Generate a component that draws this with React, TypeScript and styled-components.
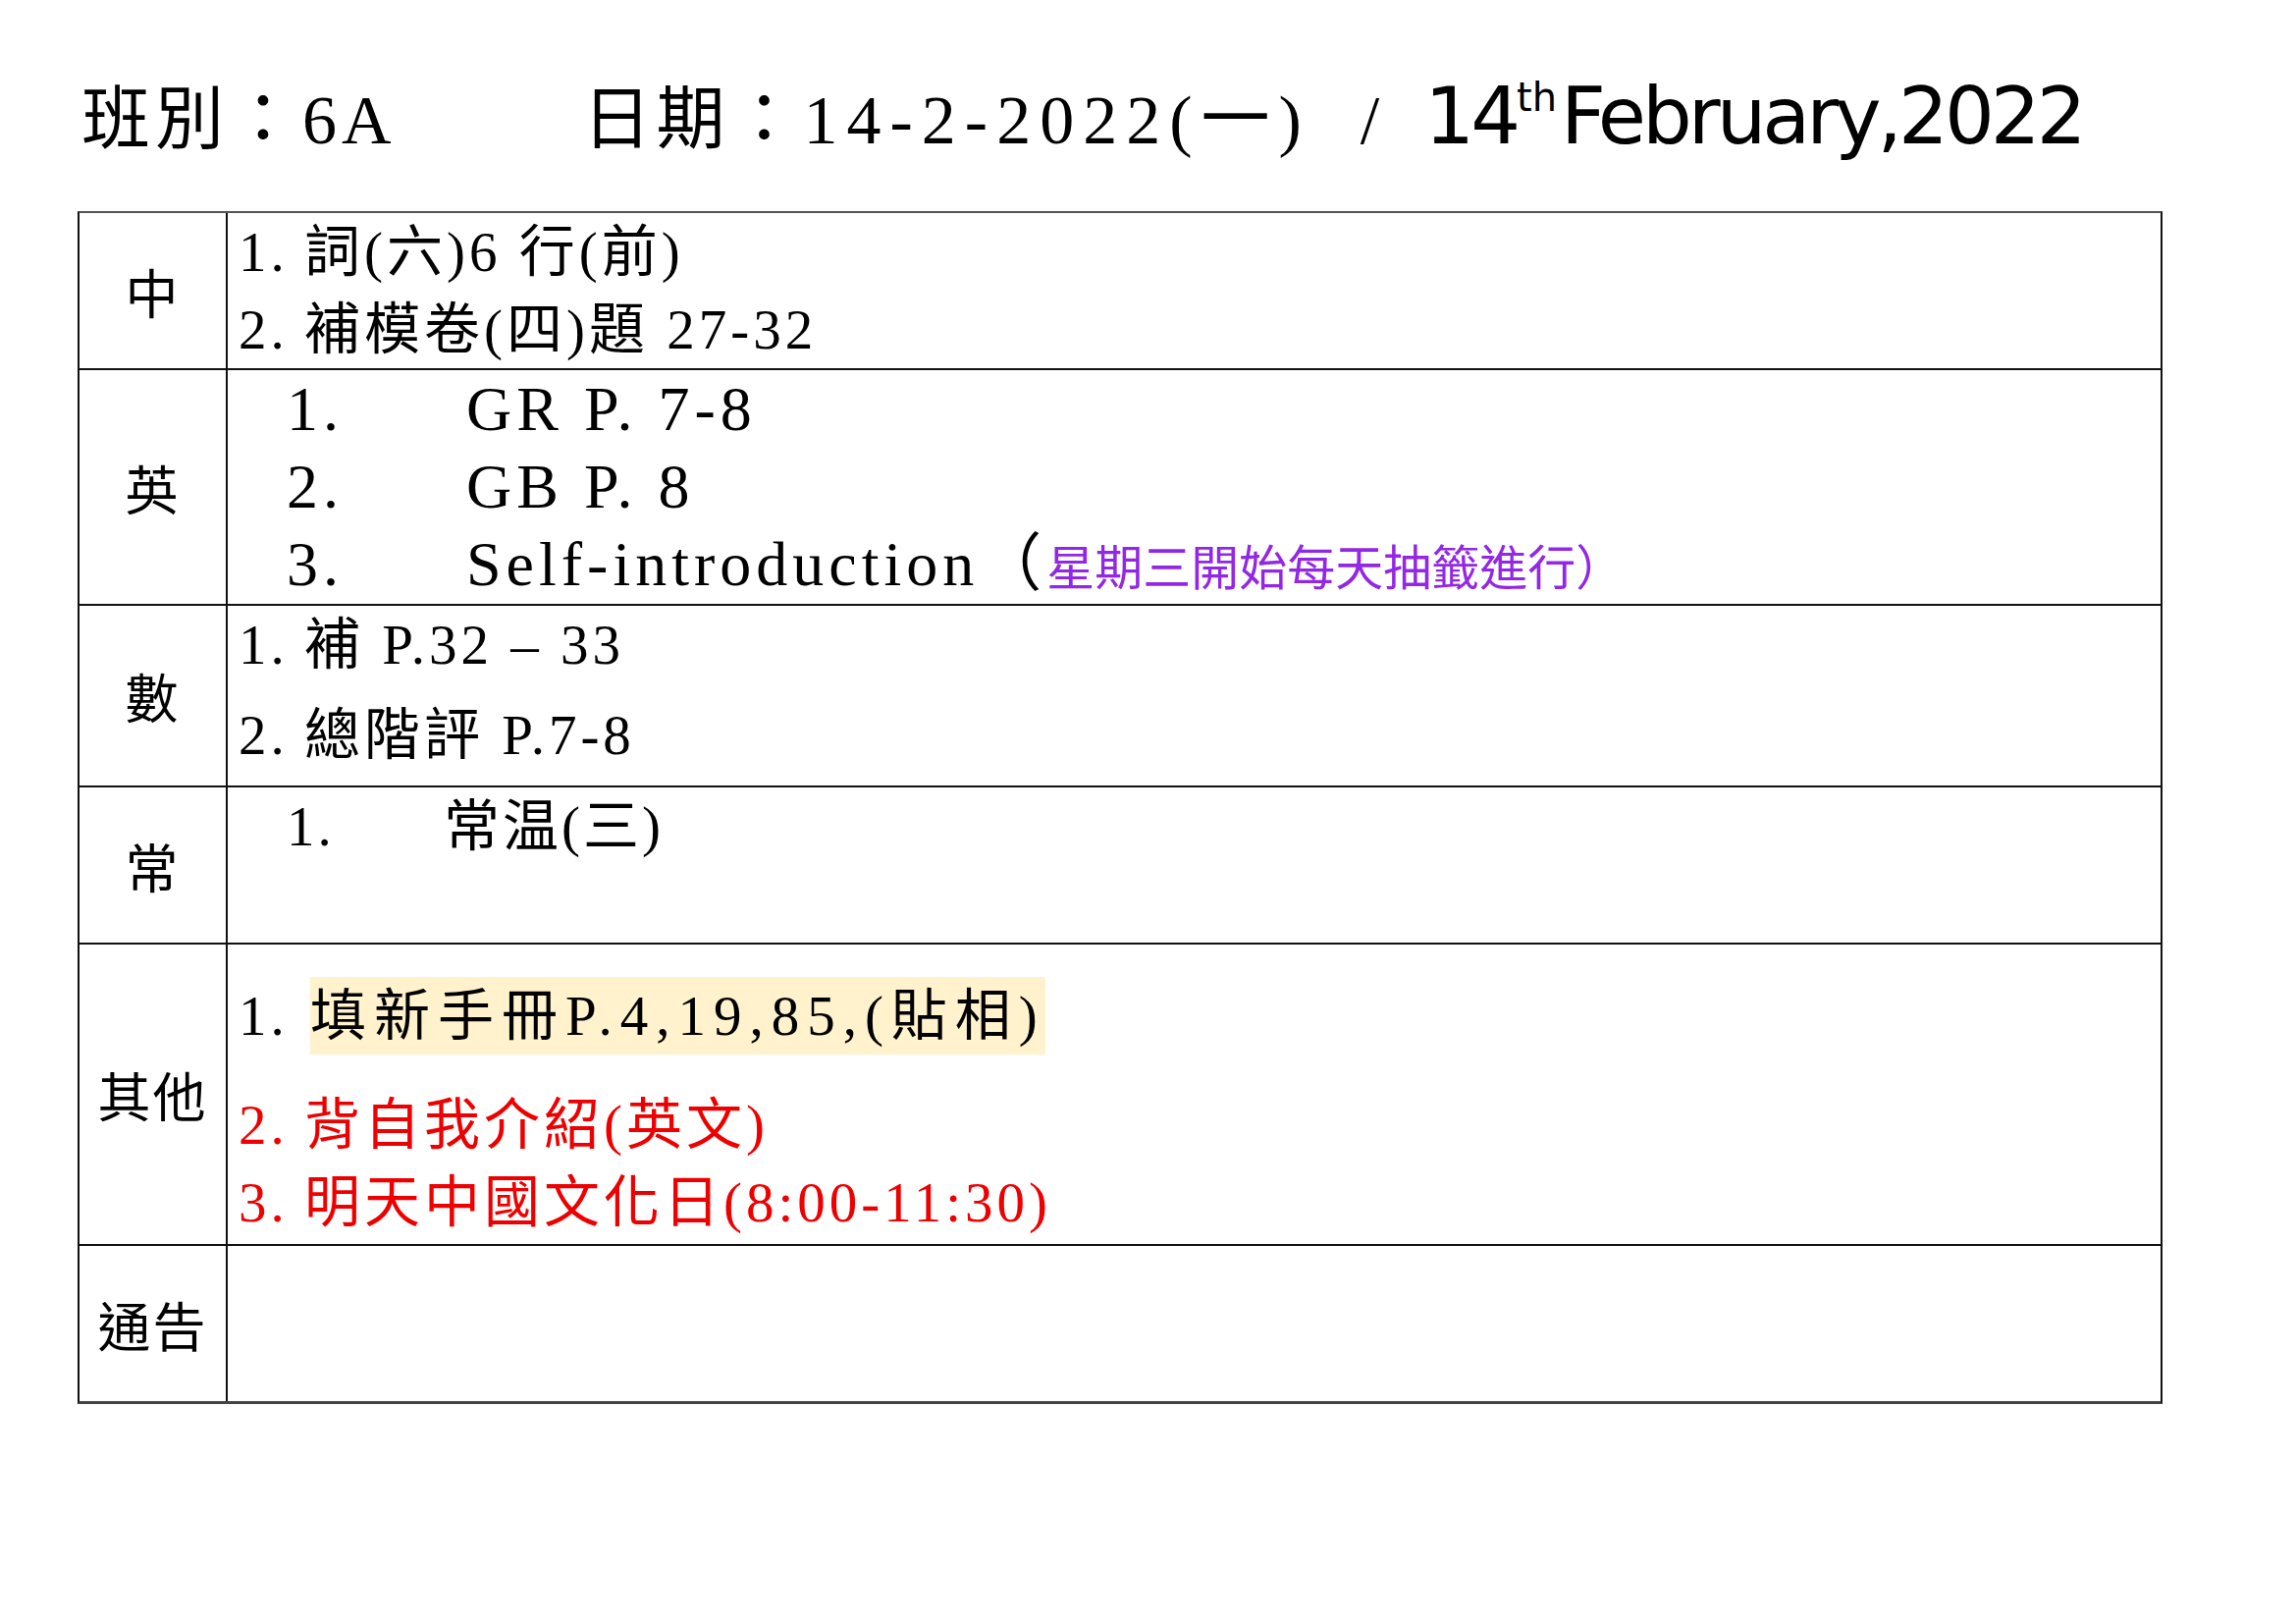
import React from "react";
import styled, { createGlobalStyle } from "styled-components";

const GlobalStyle = createGlobalStyle`
  html, body {
    margin: 0;
    padding: 0;
    background: #fff;
  }
  body {
    font-family: "Liberation Serif", "Noto Sans CJK TC", serif;
    color: #000;
  }
`;

const Page = styled.div`
  width: 2339px;
  min-height: 1653px;
  padding: 74px 0 0 79px;
  box-sizing: border-box;
`;

const Title = styled.h1`
  margin: 0 0 51px 4px;
  height: 90px;
  display: flex;
  align-items: baseline;
  font-size: 70px;
  font-weight: normal;
  line-height: 90px;
  letter-spacing: 5px;
  white-space: pre;
`;

const TitlePart = styled.span<{ $offset?: number }>`
  margin-left: ${({ $offset = 0 }) => $offset}px;
`;

const Wide = styled.span`
  letter-spacing: 9px;
`;

const Slash = styled.span`
  margin: 0 41px 0 51px;
`;

const Fancy = styled.span`
  font-family: "DejaVu Sans", sans-serif;
  font-size: 80px;
  letter-spacing: -4px;
`;

const Sup = styled.span`
  font-size: 40px;
  letter-spacing: 0;
  line-height: 0;
  vertical-align: 33px;
  margin-right: 4px;
`;

const Table = styled.div`
  width: 2124px;
  box-sizing: border-box;
  border-top: 2px solid #555;
  border-left: 2px solid #111;
  border-right: 2px solid #111;
  border-bottom: 3px solid #444;
`;

const Row = styled.div<{ $h: number }>`
  display: grid;
  grid-template-columns: 151px 1fr;
  min-height: ${({ $h }) => $h}px;

  & + & {
    border-top: 2px solid #111;
  }
`;

const Label = styled.div`
  border-right: 2px solid #111;
  display: flex;
  align-items: center;
  justify-content: center;
  font-family: "Noto Sans CJK TC", sans-serif;
  font-size: 54px;
  letter-spacing: 2px;
`;

const Cell = styled.div`
  padding-left: 11px;
  font-size: 57px;
  line-height: 79px;
  letter-spacing: 4px;
`;

const Line = styled.div<{ $gap?: number; $color?: string }>`
  margin-top: ${({ $gap = 0 }) => $gap}px;
  color: ${({ $color = "#000" }) => $color};
  white-space: pre;
`;

const Num = styled.span`
  display: inline-block;
  width: 67px;
`;

const Item = styled.div<{ $mark: number; $size?: number }>`
  display: grid;
  grid-template-columns: ${({ $mark }) => $mark}px auto;
  justify-content: start;
  padding-left: 49px;
  font-size: ${({ $size = 57 }) => $size}px;
  letter-spacing: ${({ $size = 57 }) => ($size > 60 ? 5 : 3)}px;
  white-space: pre;
`;

const Note = styled.span`
  color: #9327e6;
  font-family: "Noto Sans CJK TC", sans-serif;
  font-size: 49px;
  letter-spacing: 0;
`;

const Mark = styled.span`
  display: inline-block;
  margin-left: 6px;
  background: #fff2cc;
  letter-spacing: 8px;
`;

const RED = "#ee0000";

export default function App() {
  return (
    <Page>
      <GlobalStyle />
      <Title>
        <TitlePart>班別：6A</TitlePart>
        <TitlePart $offset={190}>
          日期：<Wide>14-2-2022(一)</Wide>
          <Slash>/</Slash>
        </TitlePart>
        <Fancy>
          14<Sup>th</Sup>February,2022
        </Fancy>
      </Title>

      <Table>
        <Row $h={158}>
          <Label>中</Label>
          <Cell>
            <Line>
              <Num>1.</Num>詞(六)6 行(前)
            </Line>
            <Line>
              <Num>2.</Num>補模卷(四)題 27-32
            </Line>
          </Cell>
        </Row>

        <Row $h={238}>
          <Label>英</Label>
          <Cell>
            <Item $mark={183} $size={64}>
              <span>1.</span>
              <span>GR P. 7-8</span>
            </Item>
            <Item $mark={183} $size={64}>
              <span>2.</span>
              <span>GB P. 8</span>
            </Item>
            <Item $mark={183} $size={64}>
              <span>3.</span>
              <span>
                Self-introduction（<Note>星期三開始每天抽籤進行）</Note>
              </span>
            </Item>
          </Cell>
        </Row>

        <Row $h={183}>
          <Label>數</Label>
          <Cell>
            <Line>
              <Num>1.</Num>補 P.32 – 33
            </Line>
            <Line $gap={13}>
              <Num>2.</Num>總階評 P.7-8
            </Line>
          </Cell>
        </Row>

        <Row $h={158}>
          <Label>常</Label>
          <Cell>
            <Item $mark={160}>
              <span>1.</span>
              <span>常温(三)</span>
            </Item>
          </Cell>
        </Row>

        <Row $h={305}>
          <Label>其他</Label>
          <Cell>
            <Line $gap={33}>
              <Num>1.</Num>
              <Mark>填新手冊P.4,19,85,(貼相)</Mark>
            </Line>
            <Line $gap={32} $color={RED}>
              <Num>2.</Num>背自我介紹(英文)
            </Line>
            <Line $color={RED}>
              <Num>3.</Num>明天中國文化日(8:00-11:30)
            </Line>
          </Cell>
        </Row>

        <Row $h={158}>
          <Label>通告</Label>
          <Cell />
        </Row>
      </Table>
    </Page>
  );
}
